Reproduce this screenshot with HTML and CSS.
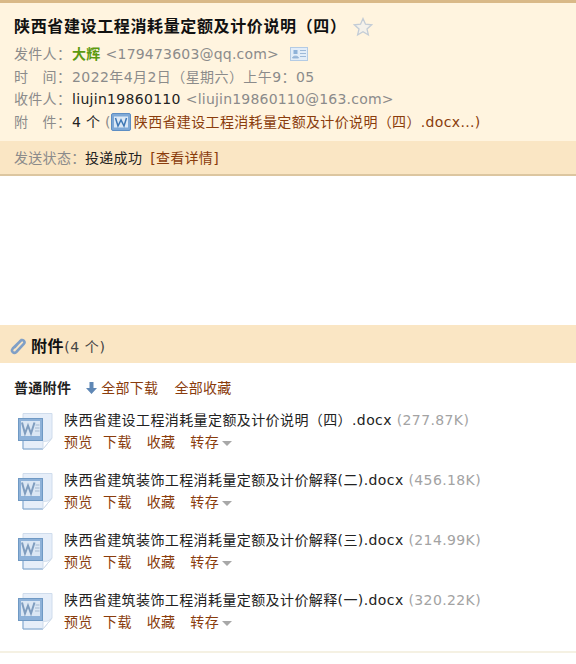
FILE: index.html
```html
<!DOCTYPE html>
<html lang="zh">
<head>
<meta charset="utf-8">
<title>邮件</title>
<link rel="stylesheet" href="styles.css">
</head>
<body>
<header class="head">
  <div class="head-main">
    <h1 class="subject">陕西省建设工程消耗量定额及计价说明（四）<svg class="star" width="20" height="20" viewBox="0 0 20 20"><path d="M10 1.500l2.500 5.700 6.200.6-4.700 4.100 1.400 6.100L10 14.800l-5.400 3.200L6 11.900 1.300 7.800l6.200-.6z" fill="#f4f1ea" stroke="#c3ccd6" stroke-width="1.300"/></svg></h1>
    <div class="row"><span class="label">发件人：</span><b class="sender">大辉</b><span class="addr">&lt;179473603@qq.com&gt;</span><svg class="card" width="18" height="14" viewBox="0 0 18 14"><rect x=".5" y=".5" width="17" height="13" fill="#e3edf8" stroke="#b4cbe4"/><rect x="3.500" y="3" width="4" height="4" fill="#8fb2d8"/><path d="M2.500 11c0-2.500 6-2.500 6 0zM10 3.500h6M10 6.500h6M10 9.500h6" fill="#8fb2d8" stroke="#9db9d8"/></svg></div>
    <div class="row"><span class="label">时　间：</span><span class="muted date">2022年4月2日（星期六）上午9：05</span></div>
    <div class="row"><span class="label">收件人：</span><span class="name">liujin19860110</span><span class="addr">&lt;liujin19860110@163.com&gt;</span></div>
    <div class="row"><span class="label">附　件：</span><span class="name">4 个 </span><span class="muted">(</span><svg class="mini" width="20" height="18" viewBox="0 0 20 18"><rect x=".5" y=".5" width="19" height="17" rx="1.500" fill="#7fa9d6" stroke="#5d8ec4"/><rect x="3" y="3.500" width="14" height="11" fill="#dce9f6"/><path d="M4.500 5l2.500 8 3-6 3 6 2.500-8" fill="none" stroke="#3f78b5" stroke-width="1.500"/></svg><a class="link wide">陕西省建设工程消耗量定额及计价说明（四）.docx...)</a></div>
  </div>
  <div class="status"><span class="label">发送状态：</span><span class="name">投递成功</span><a class="link detail">[查看详情]</a></div>
</header>
<section class="body"></section>
<section class="attachments">
  <h2 class="att-title"><svg class="clip" width="16" height="18" viewBox="0 0 16 18"><path d="M12 2.500L2.800 11.500c-2.300 2.600 1 5.800 3.500 3.500l7.500-8c2-2.400-1-5.200-3.300-3.300L4.500 10.500" fill="none" stroke="#7f9fc6" stroke-width="2.600"/></svg><b>附件</b><span class="count">(4 个)</span></h2>
  <div class="toolbar"><b>普通附件</b><svg class="down" width="11" height="14" viewBox="0 0 11 14"><path d="M3.500 1h4v6h3.500L5.500 13 0 7h3.500z" fill="#5f87b5"/></svg><a class="link">全部下载</a><a class="link all">全部收藏</a></div>
  <ul class="list">
    <li class="item"><svg class="doc" width="36" height="38" viewBox="0 0 36 38"><path d="M6 1.500h29V26L26 37H6z" fill="#e6eef9" stroke="#cfdcec"/><path d="M6 28v9h20" fill="none" stroke="#7ea6cf"/><path d="M26 37v-8c3 1 6 0 9-3z" fill="#fff" stroke="#cfdcec"/><rect x="1.500" y="6.500" width="24" height="22" fill="#8db1d8" stroke="#6f99c4"/><rect x="4" y="9" width="19" height="15" fill="#dbe7f4"/><path d="M5 10.500l3 11 3-8 3 8 3.500-11" fill="none" stroke="#7f9dbf" stroke-width="2"/><path d="M18.500 13h4M18 16h4.500M18 19h4.500" stroke="#a3b9d1"/></svg><div class="info"><div class="fname">陕西省建设工程消耗量定额及计价说明（四）.docx <span class="size">(277.87K)</span></div><div class="actions"><a class="link">预览</a><a class="link">下载</a><a class="link">收藏</a><a class="link">转存<i class="caret"></i></a></div></div></li>
    <li class="item"><svg class="doc" width="36" height="38" viewBox="0 0 36 38"><path d="M6 1.500h29V26L26 37H6z" fill="#e6eef9" stroke="#cfdcec"/><path d="M6 28v9h20" fill="none" stroke="#7ea6cf"/><path d="M26 37v-8c3 1 6 0 9-3z" fill="#fff" stroke="#cfdcec"/><rect x="1.500" y="6.500" width="24" height="22" fill="#8db1d8" stroke="#6f99c4"/><rect x="4" y="9" width="19" height="15" fill="#dbe7f4"/><path d="M5 10.500l3 11 3-8 3 8 3.500-11" fill="none" stroke="#7f9dbf" stroke-width="2"/><path d="M18.500 13h4M18 16h4.500M18 19h4.500" stroke="#a3b9d1"/></svg><div class="info"><div class="fname">陕西省建筑装饰工程消耗量定额及计价解释(二).docx <span class="size">(456.18K)</span></div><div class="actions"><a class="link">预览</a><a class="link">下载</a><a class="link">收藏</a><a class="link">转存<i class="caret"></i></a></div></div></li>
    <li class="item"><svg class="doc" width="36" height="38" viewBox="0 0 36 38"><path d="M6 1.500h29V26L26 37H6z" fill="#e6eef9" stroke="#cfdcec"/><path d="M6 28v9h20" fill="none" stroke="#7ea6cf"/><path d="M26 37v-8c3 1 6 0 9-3z" fill="#fff" stroke="#cfdcec"/><rect x="1.500" y="6.500" width="24" height="22" fill="#8db1d8" stroke="#6f99c4"/><rect x="4" y="9" width="19" height="15" fill="#dbe7f4"/><path d="M5 10.500l3 11 3-8 3 8 3.500-11" fill="none" stroke="#7f9dbf" stroke-width="2"/><path d="M18.500 13h4M18 16h4.500M18 19h4.500" stroke="#a3b9d1"/></svg><div class="info"><div class="fname">陕西省建筑装饰工程消耗量定额及计价解释(三).docx <span class="size">(214.99K)</span></div><div class="actions"><a class="link">预览</a><a class="link">下载</a><a class="link">收藏</a><a class="link">转存<i class="caret"></i></a></div></div></li>
    <li class="item"><svg class="doc" width="36" height="38" viewBox="0 0 36 38"><path d="M6 1.500h29V26L26 37H6z" fill="#e6eef9" stroke="#cfdcec"/><path d="M6 28v9h20" fill="none" stroke="#7ea6cf"/><path d="M26 37v-8c3 1 6 0 9-3z" fill="#fff" stroke="#cfdcec"/><rect x="1.500" y="6.500" width="24" height="22" fill="#8db1d8" stroke="#6f99c4"/><rect x="4" y="9" width="19" height="15" fill="#dbe7f4"/><path d="M5 10.500l3 11 3-8 3 8 3.500-11" fill="none" stroke="#7f9dbf" stroke-width="2"/><path d="M18.500 13h4M18 16h4.500M18 19h4.500" stroke="#a3b9d1"/></svg><div class="info"><div class="fname">陕西省建筑装饰工程消耗量定额及计价解释(一).docx <span class="size">(320.22K)</span></div><div class="actions"><a class="link">预览</a><a class="link">下载</a><a class="link">收藏</a><a class="link">转存<i class="caret"></i></a></div></div></li>
  </ul>
</section>
<div class="foot"></div>
</body>
</html>
```
FILE: styles.css
```css
* { box-sizing: border-box; }
html, body { margin: 0; padding: 0; background: #fff; }
body { width: 576px; height: 664px; overflow: hidden; font: 14px/20px "DejaVu Sans", "Noto Sans CJK SC", sans-serif; letter-spacing: .3px; color: #222; }
.head { border-top: 3px solid #d9b988; background: #fff4df; border-bottom: 2px solid #dcc6a0; }
.head-main { padding: 13px 14px 9px; height: 138px; }
.subject { margin: 0 0 5px; font-size: 16px; line-height: 22px; font-weight: bold; letter-spacing: .63px; color: #111; display: flex; align-items: center; white-space: nowrap; }
.star { margin-left: 6px; flex: none; }
.row { display: flex; align-items: center; height: 22.600px; white-space: pre; }
.label { color: #8b8b8b; width: 58px; flex: none; }
.sender { color: #5c9a10; font-weight: bold; }
.addr { color: #8b8b8b; margin-left: 5px; letter-spacing: .2px; }
.muted { color: #8b8b8b; }
.date { letter-spacing: .42px; }
.name { color: #222; }
.card { margin-left: 11px; }
.mini { margin: 0 3px 0 0; flex: none; }
.link { color: #8a3c0c; }
.wide { letter-spacing: .35px; }
.status { height: 33px; background: #fae6c4; padding: 0 14px; display: flex; align-items: center; white-space: pre; }
.status .label { width: 71px; }
.detail { margin-left: 8px; }
.body { height: 149px; }
.att-title { margin: 0; height: 38px; background: #fae6c4; padding: 6px 10px 0; display: flex; align-items: center; font-size: 14px; font-weight: normal; color: #444; letter-spacing: .6px; }
.att-title b { font-size: 16px; color: #111; }
.clip { margin-right: 5px; margin-top: -3px; }
.toolbar { display: flex; align-items: center; padding: 15px 14px 0; height: 35px; color: #222; }
.toolbar b { font-weight: bold; }
.down { margin-left: 15px; margin-right: 4px; }
.all { margin-left: 16px; }
.list { list-style: none; margin: 11px 0 0; padding: 0 0 0 17px; }
.item { display: flex; height: 60px; }
.doc { flex: none; margin-top: 3px; }
.info { margin-left: 11px; }
.fname { height: 22px; line-height: 22px; color: #222; white-space: pre; letter-spacing: .4px; }
.size { color: #a3a3a3; letter-spacing: .38px; }
.actions { display: flex; gap: 10.500px; line-height: 20px; margin-top: 1px; }
.actions .link:nth-child(3), .actions .link:nth-child(4) { margin-left: 4.500px; }
.caret { display: inline-block; width: 0; height: 0; margin-left: 3px; border: 5px solid transparent; border-top: 5px solid #a8a8a8; border-bottom: 0; vertical-align: 1px; }
.foot { height: 12px; margin-top: 2px; border-top: 2px solid #f5f1e3; }
```
